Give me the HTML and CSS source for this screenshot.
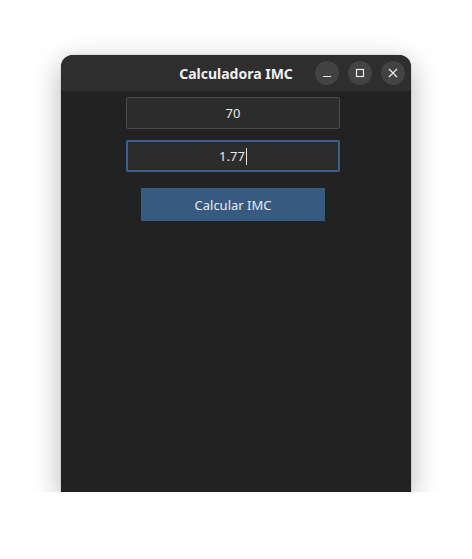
FILE: index.html
```html
<!DOCTYPE html>
<html lang="es">
<head>
<meta charset="utf-8">
<title>Calculadora IMC</title>
<link rel="stylesheet" href="styles.css">
</head>
<body>
<div class="stage">
  <div class="window">
    <div class="titlebar">
      <div class="title">Calculadora IMC</div>
      <div class="controls">
        <span class="ctl"><svg width="10" height="10" viewBox="0 0 10 10"><path d="M1 8.5h8" stroke="#ececec" stroke-width="1.2"/></svg></span>
        <span class="ctl"><svg width="10" height="10" viewBox="0 0 10 10"><rect x="1.5" y="1.5" width="7" height="7" fill="none" stroke="#ececec" stroke-width="1.2"/></svg></span>
        <span class="ctl"><svg width="10" height="10" viewBox="0 0 10 10"><path d="M1 1L9 9M9 1L1 9" stroke="#ececec" stroke-width="1.2"/></svg></span>
      </div>
    </div>
    <div class="content">
      <div class="field">70</div>
      <div class="field focused">1.77<span class="caret"></span></div>
      <div class="button">Calcular IMC</div>
    </div>
  </div>
</div>
</body>
</html>
```
FILE: styles.css
```css
html, body {
  margin: 0;
  padding: 0;
  background: #ffffff;
}
.stage {
  padding: 55px 0 0 61px;
}
.window {
  width: 350px;
  height: 437px;
  border-radius: 12px 12px 0 0;
  overflow: hidden;
  background: #222222;
  box-shadow: 0 8px 28px rgba(0,0,0,0.3), 0 0 0 1px rgba(0,0,0,0.06);
  display: flex;
  flex-direction: column;
}
.titlebar {
  height: 36px;
  background: #2e2e2e;
  position: relative;
  display: flex;
  align-items: center;
  justify-content: center;
  flex: none;
}
.title {
  font-family: "Noto Sans", "DejaVu Sans", sans-serif;
  font-weight: 700;
  font-size: 14px;
  color: #f2f2f2;
}
.controls {
  position: absolute;
  right: 6px;
  top: 6px;
  display: flex;
  gap: 9px;
}
.ctl {
  width: 24px;
  height: 24px;
  border-radius: 50%;
  background: #434343;
  display: flex;
  align-items: center;
  justify-content: center;
}
.content {
  flex: 1;
  display: flex;
  flex-direction: column;
  align-items: center;
  padding: 6px 6px 0 0;
  font-family: "Noto Sans", "Open Sans", sans-serif;
  font-size: 13px;
  color: #e8e8e8;
}
.field {
  width: 212px;
  height: 30px;
  border: 1px solid #4b4b4b;
  border-radius: 2px;
  background: #2c2c2c;
  display: flex;
  align-items: center;
  justify-content: center;
  margin-bottom: 11px;
}
.field.focused {
  border: 2px solid #3a5f88;
  width: 210px;
  height: 28px;
}
.caret {
  display: inline-block;
  width: 1px;
  height: 17px;
  background: #e8e8e8;
  margin-left: 1px;
}
.button {
  margin-top: 5px;
  width: 184px;
  height: 33px;
  background: #375a80;
  display: flex;
  align-items: center;
  justify-content: center;
  color: #e6ecf2;
}
```
